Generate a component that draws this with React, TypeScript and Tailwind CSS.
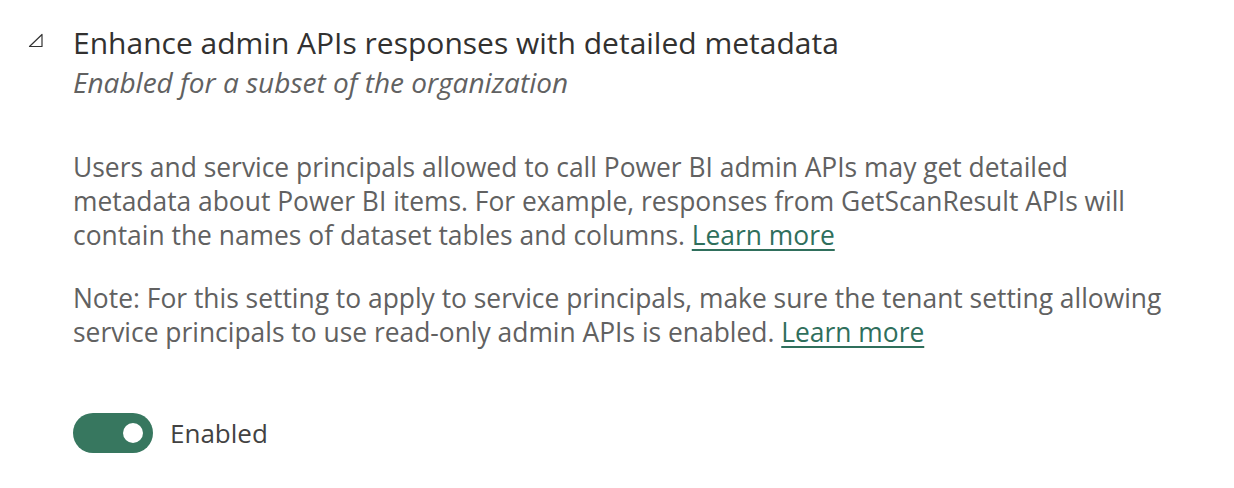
import { useState } from 'react';

function CollapseGlyph() {
  return (
    <svg width="16" height="16" viewBox="0 0 16 16" className="mt-[10px] shrink-0 text-[#333]">
      <path d="M14 1.5 L14 13.5 L1.5 13.5 Z" fill="none" stroke="currentColor" strokeWidth="1.2" strokeLinejoin="round" />
    </svg>
  );
}

function LearnMore() {
  return (
    <a href="#" className="text-[#2f6f5c] underline underline-offset-[4px] decoration-[1.5px]">
      Learn more
    </a>
  );
}

export default function App() {
  const [enabled, setEnabled] = useState(true);

  return (
    <div className="h-[488px] w-[1234px] bg-white font-['Segoe_UI','Open_Sans',sans-serif] text-[#616161]">
      <div className="flex gap-[29px] pl-[28px] pt-[23px]">
        <CollapseGlyph />
        <div className="flex-1">
          <h2 className="text-[30px] leading-[40px] font-normal text-[#323130]">
            Enhance admin APIs responses with detailed metadata
          </h2>
          <p className="text-[28px] leading-[38px] italic text-[#616161]">Enabled for a subset of the organization</p>

          <div className="mt-[49px] w-[1100px] space-y-[29px] text-[26.4px] leading-[34px]">
            <p>
              Users and service principals allowed to call Power BI admin APIs may get detailed metadata about Power BI
              items. For example, responses from GetScanResult APIs will contain the names of dataset tables and
              columns. <LearnMore />
            </p>
            <p>
              Note: For this setting to apply to service principals, make sure the tenant setting allowing service
              principals to use read-only admin APIs is enabled. <LearnMore />
            </p>
          </div>

          <div className="mt-[64px] flex items-center gap-[17px]">
            <button
              type="button"
              onClick={() => setEnabled(!enabled)}
              className={`flex h-[40px] w-[80px] items-center rounded-full px-[10px] ${
                enabled ? 'justify-end bg-[#37775f]' : 'justify-start border-2 border-[#616161] bg-white'
              }`}
            >
              <span className={`h-[20px] w-[20px] rounded-full ${enabled ? 'bg-white' : 'bg-[#616161]'}`} />
            </button>
            <span className="text-[26px] text-[#424242]">{enabled ? 'Enabled' : 'Disabled'}</span>
          </div>
        </div>
      </div>
    </div>
  );
}
